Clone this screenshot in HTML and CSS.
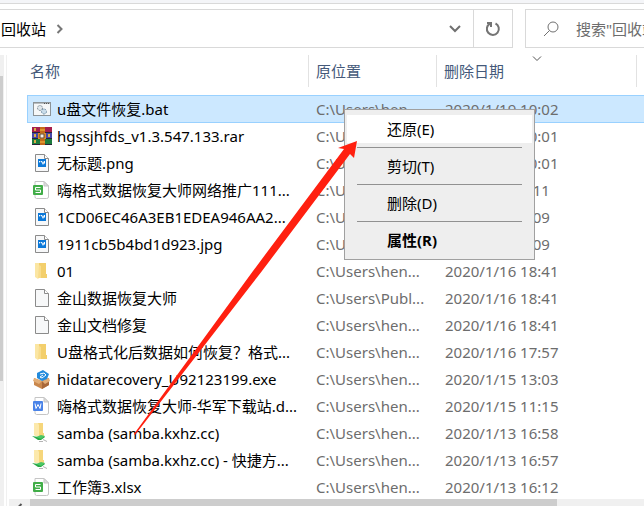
FILE: index.html
```html
<!DOCTYPE html>
<html lang="zh-CN">
<head>
<meta charset="utf-8">
<title>回收站</title>
<link rel="stylesheet" href="styles.css">
</head>
<body>
<svg class="defs" aria-hidden="true">
  <symbol id="page" viewBox="0 0 20 20">
    <path d="M3.5 1.500h9l4 4v13h-13z" fill="#f7f8f9" stroke="#8b8b8b"/>
    <path d="M12.500 1.500v4h4" fill="#fff" stroke="#8b8b8b"/>
  </symbol>
  <symbol id="image" viewBox="0 0 20 20">
    <use href="#page"/>
    <rect x="6" y="6" width="8" height="8" fill="#0b78d8"/>
    <path d="M7 10l1.500-2 1.500 2 1 2 1-2 1 1V8h-1l-1 2-1-2H7z" fill="#fff"/>
  </symbol>
  <symbol id="folder" viewBox="0 0 20 20">
    <path d="M3 2h4l1 2v12l-2 2-3-2z" fill="#fbe6a3"/>
    <path d="M7 2h7v11h1v4H7z" fill="#f3cf6c"/>
    <path d="M7 4l2 1v12H6z" fill="#f8dc8c"/>
  </symbol>
  <symbol id="samba" viewBox="0 0 20 20">
    <path d="M2 0h9v10h1v3H5l-3-1z" fill="#f6d67b"/>
    <path d="M2 0h4l1 2v12l-5-2z" fill="#fce9ac"/>
    <path d="M0 13l6 1 6-1 1 1-4 3H6z" fill="#27a844"/>
    <path d="M4 14l5 2 4-3-4-1z" fill="#4cc766"/>
    <path d="M7 18.500h4M11 16.500l4 2" stroke="#b4b4b4" fill="none"/>
  </symbol>
  <symbol id="sheet" viewBox="0 0 20 20">
    <path d="M3 1.500h9l4.500 4.500v11q0 1.500-2 1.500h-10q-1.500 0-1.500-2z" fill="#fff" stroke="#c5c5c5"/>
    <path d="M12 1.500V6h4.500z" fill="#ddd" stroke="#c5c5c5"/>
    <rect x="1" y="5" width="10" height="10" rx="1" fill="#41ad48"/>
    <path d="M8.500 7.500h-5V10h5v2.500h-5" fill="none" stroke="#fff"/>
  </symbol>
  <symbol id="doc" viewBox="0 0 20 20">
    <path d="M3 1.500h9l4.500 4.500v11q0 1.500-2 1.500h-10q-1.500 0-1.500-2z" fill="#fff" stroke="#c5c5c5"/>
    <path d="M12 1.500V6h4.500z" fill="#ddd" stroke="#c5c5c5"/>
    <rect x="1" y="5" width="10" height="10" rx="1" fill="#4a83e8"/>
    <path d="M3 7.500l1 5 2-4 2 4 1-5" fill="none" stroke="#fff"/>
  </symbol>
  <symbol id="bat" viewBox="0 0 20 20">
    <rect x="1.500" y="3.500" width="17" height="13" fill="#f5f7f8" stroke="#8d9498"/>
    <path d="M2 4.500h16" stroke="#b8bdc0"/>
    <path d="M12 4.500h5" stroke="#555" stroke-dasharray="1 1"/>
    <circle cx="8" cy="9" r="2.500" fill="#dfe7ec" stroke="#7e8b94" stroke-dasharray="2 1"/>
    <circle cx="12" cy="12.500" r="2.500" fill="#c9dcea" stroke="#6d8ba2" stroke-dasharray="2 1"/>
  </symbol>
  <symbol id="rar" viewBox="0 0 20 20">
    <rect y="1" width="20" height="6" fill="#a51f4c"/>
    <rect y="7" width="20" height="6" fill="#4646a8"/>
    <rect y="13" width="20" height="6" fill="#1c7b3d"/>
    <path d="M0 6.500h20M0 12.500h20M0 18.500h20" stroke="#272238"/>
    <path d="M3 2v3M3 8v3M3 14v3M17 8v3" stroke="#d9ae46" stroke-width="2"/>
    <rect x="8" y="1" width="5" height="18" fill="#c56a1b"/>
    <path d="M8 4h5M8 16h5" stroke="#f4c042"/>
    <path d="M6 7h8v6H6z" fill="#d98b2b"/>
    <path d="M8 8h4v4H8z" fill="#f3f1ea" stroke="#6b4b31"/>
  </symbol>
  <symbol id="box" viewBox="0 0 20 20">
    <path d="M2 9l8 3 7-3v7l-7 4-8-4z" fill="#c9874c"/>
    <path d="M10 12l7-3v7l-7 4z" fill="#a9683a"/>
    <path d="M2 9l8 3-3 3-6-3zM17 9l-7 3 3 3 5-3z" fill="#e2ad76"/>
    <path d="M5 4l6-3 6 4-2 5-5 2-5-3z" fill="#248bdc"/>
    <path d="M8 5l4-1 2 2-4 3-2-1 3-2" fill="none" stroke="#fff"/>
  </symbol>
</svg>

<header class="toolbar">
  <nav class="address" aria-label="地址">
    <a class="crumb" href="#">回收站</a>
    <svg class="next" viewBox="0 0 7 10"><path d="M1.500 1l4 4-4 4" fill="none" stroke="#777" stroke-width="2"/></svg>
    <button class="history" aria-label="历史记录"><svg width="14" height="10" viewBox="0 0 14 10"><path d="M2 2l5 5 5-5" fill="none" stroke="#707070" stroke-width="2"/></svg></button>
    <button class="refresh" aria-label="刷新"><svg width="16" height="16" viewBox="0 0 16 16"><path d="M10.500 2.500A6 6 0 1 1 5 2.600M2 2h4v4" fill="none" stroke="#747474" stroke-width="2"/></svg></button>
  </nav>
  <label class="search">
    <svg width="16" height="16" viewBox="0 0 16 16"><circle cx="10" cy="6" r="5" fill="none" stroke="#707070"/><path d="M6.500 9.500L1 15" stroke="#707070"/></svg>
    <input type="text" placeholder="搜索&quot;回收站&quot;" aria-label="搜索">
  </label>
</header>

<div class="content">
  <div class="tree-scroll"><div class="tree-thumb"></div></div>
  <main class="pane">
    <div class="list">
      <table>
        <colgroup><col class="c-name"><col class="c-place"><col class="c-date"><col></colgroup>
        <thead>
          <tr>
            <th><div class="head first">名称</div></th>
            <th><div class="head">原位置</div></th>
            <th><div class="head">删除日期<svg class="sort" width="10" height="6" viewBox="0 0 10 6"><path d="M1 .5l4 4 4-4" fill="none" stroke="#555"/></svg></div></th>
            <th></th>
          </tr>
        </thead>
        <tbody>
          <tr class="selected"><td><div class="name"><svg><use href="#bat"/></svg>u盘文件恢复.bat</div></td><td>C:\Users\hen...</td><td>2020/1/19 10:02</td><td></td></tr>
          <tr><td><div class="name"><svg><use href="#rar"/></svg>hgssjhfds_v1.3.547.133.rar</div></td><td>C:\Users\hen...</td><td>2020/1/19 10:01</td><td></td></tr>
          <tr><td><div class="name"><svg><use href="#image"/></svg>无标题.png</div></td><td>C:\Users\hen...</td><td>2020/1/19 10:01</td><td></td></tr>
          <tr><td><div class="name"><svg><use href="#sheet"/></svg>嗨格式数据恢复大师网络推广111...</div></td><td>C:\Users\hen...</td><td>2020/1/19 9:11</td><td></td></tr>
          <tr><td><div class="name"><svg><use href="#image"/></svg>1CD06EC46A3EB1EDEA946AA2...</div></td><td>C:\Users\hen...</td><td>2020/1/19 9:09</td><td></td></tr>
          <tr><td><div class="name"><svg><use href="#image"/></svg>1911cb5b4bd1d923.jpg</div></td><td>C:\Users\hen...</td><td>2020/1/19 9:09</td><td></td></tr>
          <tr><td><div class="name"><svg><use href="#folder"/></svg>01</div></td><td>C:\Users\hen...</td><td>2020/1/16 18:41</td><td></td></tr>
          <tr><td><div class="name"><svg><use href="#page"/></svg>金山数据恢复大师</div></td><td>C:\Users\Publ...</td><td>2020/1/16 18:41</td><td></td></tr>
          <tr><td><div class="name"><svg><use href="#page"/></svg>金山文档修复</div></td><td>C:\Users\hen...</td><td>2020/1/16 18:41</td><td></td></tr>
          <tr><td><div class="name"><svg><use href="#folder"/></svg>U盘格式化后数据如何恢复？格式...</div></td><td>C:\Users\hen...</td><td>2020/1/16 17:57</td><td></td></tr>
          <tr><td><div class="name"><svg><use href="#box"/></svg>hidatarecovery_U92123199.exe</div></td><td>C:\Users\hen...</td><td>2020/1/15 13:03</td><td></td></tr>
          <tr><td><div class="name"><svg><use href="#doc"/></svg>嗨格式数据恢复大师-华军下载站.d...</div></td><td>C:\Users\hen...</td><td>2020/1/15 11:15</td><td></td></tr>
          <tr><td><div class="name"><svg><use href="#samba"/></svg>samba (samba.kxhz.cc)</div></td><td>C:\Users\hen...</td><td>2020/1/13 16:58</td><td></td></tr>
          <tr><td><div class="name"><svg><use href="#samba"/></svg>samba (samba.kxhz.cc) - 快捷方...</div></td><td>C:\Users\hen...</td><td>2020/1/13 16:57</td><td></td></tr>
          <tr><td><div class="name"><svg><use href="#sheet"/></svg>工作簿3.xlsx</div></td><td>C:\Users\hen...</td><td>2020/1/13 16:12</td><td></td></tr>
        </tbody>
      </table>
    </div>
    <div class="hscroll">
      <svg width="21" height="7" viewBox="0 0 21 7"><path d="M12.500 5l-4 4" stroke="#555" stroke-width="2"/></svg>
      <div class="hthumb"></div>
    </div>
  </main>
</div>

<div class="menu" role="menu">
  <button class="active" role="menuitem">还原(E)</button>
  <hr>
  <button role="menuitem">剪切(T)</button>
  <hr>
  <button role="menuitem">删除(D)</button>
  <hr>
  <button class="default" role="menuitem">属性(R)</button>
</div>

<svg class="pointer" width="230" height="300" viewBox="0 0 230 300" aria-hidden="true">
  <path d="M227 1L224 18 220 14 132 131 5 295 4 294 123 131 214 9 208 8z" fill="#ff2010"/>
</svg>
</body>
</html>
```
FILE: styles.css
```css
* { box-sizing: border-box; }

body {
  margin: 0;
  height: 100vh;
  display: flex;
  flex-direction: column;
  overflow: hidden;
  background: #fff;
  color: #000;
  font: 15px/20px "Noto Sans", "Noto Sans CJK SC", sans-serif;
}

button, input { font: inherit; border: 0; background: none; padding: 0; }

.defs { position: absolute; width: 0; height: 0; }

.toolbar {
  display: flex;
  gap: 12px;
  height: 55px;
  padding-top: 5px;
  border-top: 3px solid #f4f5f8;
  box-shadow: inset 0 1px #d9d9d9;
}

.address, .search {
  display: flex;
  align-items: center;
  height: 39px;
  margin-top: 1px;
  border: 1px solid #d9d9d9;
}

.address { flex: 1; border-left: 0; }
.crumb { padding-left: 1px; color: #000; text-decoration: none; }
.next { width: 7px; height: 10px; margin-left: 10px; }
.history { width: 36px; height: 37px; margin-left: auto; }
.refresh { width: 39px; height: 37px; border-left: 1px solid #d9d9d9; }
.history svg, .refresh svg { display: block; margin: auto; }

.search { width: 119px; gap: 17px; padding-left: 17px; border-right: 0; overflow: hidden; }
.search svg { flex: none; }
.search input { width: 96px; flex: none; color: #6d6d6d; outline: 0; }
.search input::placeholder { color: #6d6d6d; opacity: 1; }

.content { flex: 1; display: flex; min-height: 0; }
.tree-scroll { width: 4px; padding-top: 21px; background: #f0f0f0; }
.tree-thumb { width: 3px; height: 71%; background: #cdcdcd; }

.pane {
  flex: 1;
  display: flex;
  flex-direction: column;
  min-width: 0;
  margin-left: 2px;
  border-left: 1px solid #f0f0f0;
}

.list { flex: 1; min-height: 0; overflow: hidden; padding-left: 20px; }

table { width: 100%; table-layout: fixed; border-collapse: separate; border-spacing: 0; }
.c-name { width: 282px; }
.c-place { width: 128px; }
.c-date { width: 200px; }

th { height: 40px; padding: 0; vertical-align: top; text-align: left; font-weight: 400; }
.head {
  position: relative;
  height: 32px;
  padding: 6px 0 0 7px;
  border-right: 1px solid #e2e2e2;
  color: #44597a;
}
.head.first { padding-left: 3px; }
.sort { position: absolute; top: 1px; left: 50%; margin-left: -5px; }

td { height: 27px; padding: 0 0 0 7px; color: #6d6d6d; white-space: nowrap; }
td:nth-child(3) { padding-left: 8px; }
td:first-child { padding-left: 5px; color: #000; }
.name { display: flex; align-items: center; gap: 5px; }
.name svg { flex: none; width: 20px; height: 20px; }

.selected td {
  background: #cce8ff;
  border-top: 1px solid #99d1ff;
  box-shadow: 0 1px #99d1ff;
}
.selected td:first-child { border-left: 1px solid #99d1ff; padding-left: 4px; }

.hscroll { display: flex; flex: none; height: 7px; margin-left: 2px; background: #f0f0f0; }
.hthumb { width: 83%; background: #cdcdcd; }
.hscroll svg { flex: none; }

.menu {
  position: absolute;
  left: 344px;
  top: 109px;
  width: 191px;
  padding: 5px 2px;
  border: 1px solid #a0a0a0;
  background: #eee;
}
.menu button { display: block; width: 100%; height: 28px; padding-left: 40px; text-align: left; color: #000; }
.menu .active { background: #fff; }
.menu .default { font-weight: 700; }
.menu hr { height: 1px; margin: 4px 10px; border: 0; background: #919191; }

.pointer { position: absolute; left: 130px; top: 140px; pointer-events: none; }
```
